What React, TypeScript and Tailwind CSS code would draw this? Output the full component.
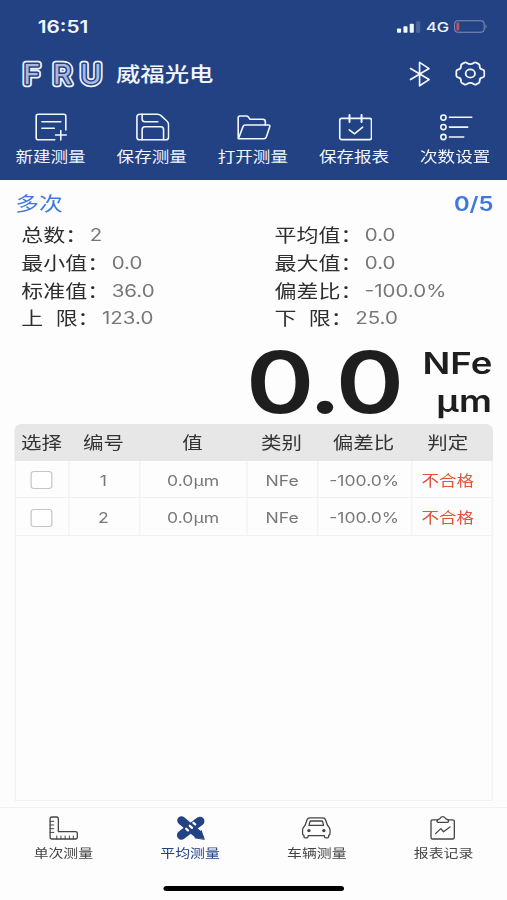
import React from "react";

const stats = [
  { label: "总数：", value: "2" },
  { label: "平均值：", value: "0.0" },
  { label: "最小值：", value: "0.0" },
  { label: "最大值：", value: "0.0" },
  { label: "标准值：", value: "36.0" },
  { label: "偏差比：", value: "-100.0%" },
  { label: "上  限：", value: "123.0" },
  { label: "下  限：", value: "25.0" },
];

const rows = [
  { id: 1, value: "0.0µm", type: "NFe", ratio: "-100.0%", result: "不合格" },
  { id: 2, value: "0.0µm", type: "NFe", ratio: "-100.0%", result: "不合格" },
];

const toolbar = [
  {
    label: "新建测量",
    icon: (
      <>
        <path d="M31.5 17V3.2Q31.5 1.2 29.5 1.2H4Q2 1.2 2 3.2V24.8Q2 26.8 4 26.8H20.5" />
        <path d="M7.7 8.8H26.5M7.7 15.2H20M26.5 17.5V27M21.3 22H32" />
      </>
    ),
  },
  {
    label: "保存测量",
    icon: (
      <>
        <path d="M4.5 1.2H22Q24 1.2 25.5 2.6L31.3 8Q33 9.6 33 11.6V24.2Q33 26.8 30.4 26.8H4.1Q1.5 26.8 1.5 24.2V4Q1.5 1.2 4.5 1.2Z" />
        <path d="M6.7 1.2V6Q6.7 8.8 9.5 8.8H22.3M6.7 26.8V16.5Q6.7 13.8 9.4 13.8H25.3Q28 13.8 28 16.5V26.8" />
      </>
    ),
  },
  {
    label: "打开测量",
    icon: (
      <>
        <path d="M1.5 25V4.8Q1.5 3 3.3 3H9.5Q10.8 3 11.6 4L13.3 6.2H26Q28.5 6.2 28.5 8.5V12" />
        <path d="M1.7 25.7L6.3 13.6Q6.9 12 8.6 12H31.7Q33.5 12 33 13.6L29.5 24Q28.9 25.7 27.2 25.7Z" />
      </>
    ),
  },
  {
    label: "保存报表",
    icon: (
      <>
        <rect x="1.8" y="5.4" width="31.6" height="21.2" rx="2" />
        <path d="M11.5 2V9M23.5 2V9" strokeWidth="2" />
        <path d="M11.3 16.8L16.5 20.8L24.6 14.2" />
      </>
    ),
  },
  {
    label: "次数设置",
    icon: (
      <>
        <circle cx="4.2" cy="4.6" r="2.6" />
        <circle cx="4.2" cy="14.1" r="2.6" />
        <circle cx="4.2" cy="24" r="2.6" />
        <path d="M10.2 4.3H32.4M10.2 14.1H28.4M10.2 24H24.4" />
      </>
    ),
  },
];

const tabs = [
  {
    label: "单次测量",
    icon: (
      <>
        <path d="M3.2 2H7.8Q9.6 2 9.6 3.8V16.6H26.7Q28.6 16.6 28.6 18.4V22.2Q28.6 24 26.7 24H3.2Q1.3 24 1.3 22.2V3.8Q1.3 2 3.2 2Z" />
        <path d="M1.3 6.3H5M1.3 10H5M1.3 13.7H5M1.3 17.4H5M8 24V21M12.2 24V21M16.4 24V21M20.6 24V21M24.6 24V21" strokeWidth="1" />
      </>
    ),
  },
  {
    label: "平均测量",
    active: true,
    icon: (
      <>
        <path d="M5.8 5.4L21.5 18.6" strokeWidth="8.5" />
        <path d="M19.5 22.6L25.6 15.6L28.6 24Z" fill="currentColor" strokeWidth="1" />
        <path d="M24.4 6.2L5.8 20.2" strokeWidth="9" />
        <path d="M17.8 7.8L19.6 9.4M14.2 10.8L16.4 12.8M10.6 13.8L12.4 15.4" stroke="#fdfdfd" strokeWidth="2.3" />
      </>
    ),
  },
  {
    label: "车辆测量",
    icon: (
      <>
        <path d="M8.6 2.8H21.4Q23.6 2.8 24.3 4.8L26.1 10L28 12.6Q28.8 13.8 28.8 15.2V18.5Q28.8 20 27.4 20.4V21.6Q27.4 22.8 26 22.8H24.6Q23.2 22.8 23.2 21.6V20.6H6.8V21.6Q6.8 22.8 5.4 22.8H4Q2.6 22.8 2.6 21.6V20.4Q1.2 20 1.2 18.5V15.2Q1.2 13.8 2 12.6L3.9 10L5.7 4.8Q6.4 2.8 8.6 2.8Z" />
        <path d="M9.8 6H20.2Q21.2 6 21.5 7L22.3 10.4H7.7L8.5 7Q8.8 6 9.8 6Z" />
        <circle cx="7.6" cy="15.6" r="1.7" fill="currentColor" stroke="none" />
        <circle cx="22.6" cy="15.6" r="1.7" fill="currentColor" stroke="none" />
      </>
    ),
  },
  {
    label: "报表记录",
    icon: (
      <>
        <path d="M9 4.8H4.4Q2.8 4.8 2.8 6.4V22.4Q2.8 24 4.4 24H24.6Q26.2 24 26.2 22.4V6.4Q26.2 4.8 24.6 4.8H20.3" />
        <path d="M8.8 6.6Q8.8 4.2 11.6 3.8Q12.4 1.6 14.6 1.6Q16.8 1.6 17.6 3.8Q20.4 4.2 20.4 6.6Q20.4 7.4 19.4 7.4H9.8Q8.8 7.4 8.8 6.6Z" />
        <path d="M7.4 18.6L12.6 13.6L15.4 16.8L21.8 12" />
      </>
    ),
  },
];

const columns = "grid grid-cols-[44px_57.5px_88.5px_57.5px_77px_1fr]";

const StatusBar = () => (
  <div className="flex h-[53px] items-center justify-between pl-[31px] pr-[15.5px]">
    <span className="pt-[2px] text-[17px] font-semibold">16:51</span>
    <div className="flex items-center">
      <svg className="h-3 w-[20px]" viewBox="0 0 24 12" preserveAspectRatio="none" fill="currentColor">
        <rect x="0.5" y="7.5" width="4" height="4.3" rx="0.8" />
        <rect x="6.8" y="5.3" width="4" height="6.5" rx="0.8" />
        <rect x="13" y="2.8" width="4" height="9" rx="0.8" />
        <rect x="19.3" y="0.2" width="4" height="11.6" rx="0.8" opacity="0.2" />
      </svg>
      <span className="ml-[4.5px] pt-px text-[13.5px] font-medium">4G</span>
      <svg className="ml-[4px] h-[13px] w-[28px]" viewBox="0 0 34 13" preserveAspectRatio="none" fill="none">
        <rect x="0.8" y="0.8" width="29.4" height="11.4" rx="3.4" stroke="#8290b4" />
        <rect x="2.6" y="2.6" width="2.8" height="7.8" rx="1" fill="#c4505c" />
        <path d="M31.6 4.2Q33.6 6.5 31.6 8.8Z" fill="#8290b4" />
      </svg>
    </div>
  </div>
);

const Header = () => (
  <header className="h-[180px] bg-[#224284] text-[#f2f6ff]">
    <StatusBar />
    <div className="flex h-[42px] items-center pl-[16px] pr-[17px]">
      {/* Logo */}
      <svg className="h-8 w-[72px] overflow-visible" viewBox="0 0 84 32" preserveAspectRatio="none" strokeLinejoin="round" fontFamily="Inter, sans-serif" fontWeight="400" fontSize="27.5">
        <text x="3.5 32 58" y="26" fill="none" stroke="#f0f4ff" strokeWidth="6.4">FRU</text>
        <text x="3.5 32 58" y="26" fill="#224284" stroke="#224284" strokeWidth="3">FRU</text>
        <text x="3.5 32 58" y="26" fill="#a9b8de">FRU</text>
      </svg>
      <h1 className="ml-[7px] pt-[2px] text-[20px] font-medium">威福光电</h1>
      <svg className="ml-auto h-[26px] w-[18px]" viewBox="0 0 22 26" preserveAspectRatio="none" fill="none" stroke="currentColor" strokeWidth="1.7" strokeLinecap="round" strokeLinejoin="round">
        <path d="M1.8 7.6L20.4 18.6L10.9 24.8V1.4L20.4 7.6L1.8 18.6" />
      </svg>
      <svg className="mb-px ml-[20px] mr-[0.5px] h-[25px] w-[25px]" viewBox="0 0 32 26" preserveAspectRatio="none" fill="none" stroke="currentColor" strokeWidth="1.9" strokeLinejoin="round">
        <path d="M9.5 1.9Q11 1 12.5 2Q16 4.6 19.5 2Q21 1 22.5 1.9L24.6 3Q26 3.8 25.8 5.4Q25.6 8.4 29 9Q30.7 9.5 30.7 11V15Q30.7 16.5 29 17Q25.6 17.6 25.8 20.6Q26 22.2 24.6 23L22.5 24.1Q21 25 19.5 24Q16 21.4 12.5 24Q11 25 9.5 24.1L7.4 23Q6 22.2 6.2 20.6Q6.4 17.6 3 17Q1.3 16.5 1.3 15V11Q1.3 9.5 3 9Q6.4 8.4 6.2 5.4Q6 3.8 7.4 3Z" />
        <ellipse cx="16" cy="13" rx="4.9" ry="4.3" />
      </svg>
    </div>
    <nav className="grid grid-cols-5 pr-px pt-[18px]">
      {toolbar.map((item) => (
        <div key={item.label} className="flex flex-col items-center">
          <svg className="ml-[2px] h-7 w-[28px]" viewBox="0 0 34 28" preserveAspectRatio="none" fill="none" stroke="currentColor" strokeWidth="1.6" strokeLinecap="round" strokeLinejoin="round">
            {item.icon}
          </svg>
          <span className="mt-[5.5px] text-[14.4px] leading-5">{item.label}</span>
        </div>
      ))}
    </nav>
  </header>
);

const Summary = () => (
  <section className="px-[12px]">
    <div className="flex h-[42px] items-center justify-between pt-[7px] text-[19.5px] text-[#3f78e0]">
      <span className="ml-[0.5px]">多次</span>
      <span className="-mr-px font-semibold">0/5</span>
    </div>
    <div className="grid grid-cols-[207.5px_1fr] pl-[5.5px]">
      {stats.map((item) => (
        <div key={item.label} className="flex h-[27.7px] items-center">
          <span className="whitespace-pre text-[18px] text-[#2e2e2e]">{item.label}</span>
          <span className="ml-[2px] text-[16.8px] text-[#777]">{item.value}</span>
        </div>
      ))}
    </div>
  </section>
);

const Reading = () => (
  <section className="flex h-[91px] items-start justify-end pr-[12px] font-semibold text-[#1e1e1e]">
    <span className="mt-[8px] text-[85px] leading-[84px] tracking-[-2.4px]">0.0</span>
    <div className="ml-[17.5px] mt-[11px] text-right text-[30px] leading-[38px]">
      <div>NFe</div>
      <div className="tracking-[0.3px]">µm</div>
    </div>
  </section>
);

const Table = () => (
  <section className="mx-[12px] h-[377px] rounded-t-md border border-[#f1f1f1]">
    <div className={`${columns} -mx-px -mt-px h-[37px] items-center rounded-t-md bg-[#e7e7e7] pt-[2px] text-center text-[16.8px] text-[#333]`}>
      <span>选择</span>
      <span>编号</span>
      <span>值</span>
      <span>类别</span>
      <span>偏差比</span>
      <span className="pr-[6px]">判定</span>
    </div>
    {rows.map((row) => (
      <div key={row.id} className={`${columns} h-[37.7px] divide-x divide-[#f1f1f1] border-b border-[#f1f1f1] text-[14.4px] text-[#777] *:flex *:items-center *:justify-center *:pt-[3px]`}>
        <div>
          <span className="mb-px mr-[2px] h-[18px] w-[18px] rounded-[3px] border border-[#c4c4c4] bg-white" />
        </div>
        <div className="pr-px">{row.id}</div>
        <div>{row.value}</div>
        <div>{row.type}</div>
        <div>{row.ratio}</div>
        <div className="pr-[6px] text-[#e2533b]">{row.result}</div>
      </div>
    ))}
  </section>
);

const TabBar = () => (
  <footer className="mt-[6px] border-t border-[#f1f1f1]">
    <nav className="grid grid-cols-4 pt-[7px]">
      {tabs.map((tab) => (
        <div key={tab.label} className={`flex flex-col items-center ${tab.active ? "text-[#224284]" : "text-[#444]"}`}>
          <svg className="h-[26px] w-[24.5px]" viewBox="0 0 30 26" preserveAspectRatio="none" fill="none" stroke="currentColor" strokeWidth="1.3" strokeLinejoin="round" strokeLinecap="round">
            {tab.icon}
          </svg>
          <span className="mt-[5px] text-[12.2px] leading-4">{tab.label}</span>
        </div>
      ))}
    </nav>
    <div className="mx-auto mt-[24px] h-[5px] w-[148px] rounded-full bg-black" />
  </footer>
);

const App = () => {
  return (
    <div className="h-[900px] w-[507px] overflow-hidden bg-[#fdfdfd]">
      {/* The whole screen is drawn wider than its natural proportions */}
      <main className="h-[900px] w-[415.57px] origin-top-left scale-x-[1.22] font-[Inter,'Noto_Sans_CJK_SC',sans-serif]">
        <Header />
        <Summary />
        <Reading />
        <Table />
        <TabBar />
      </main>
    </div>
  );
};

export default App;
